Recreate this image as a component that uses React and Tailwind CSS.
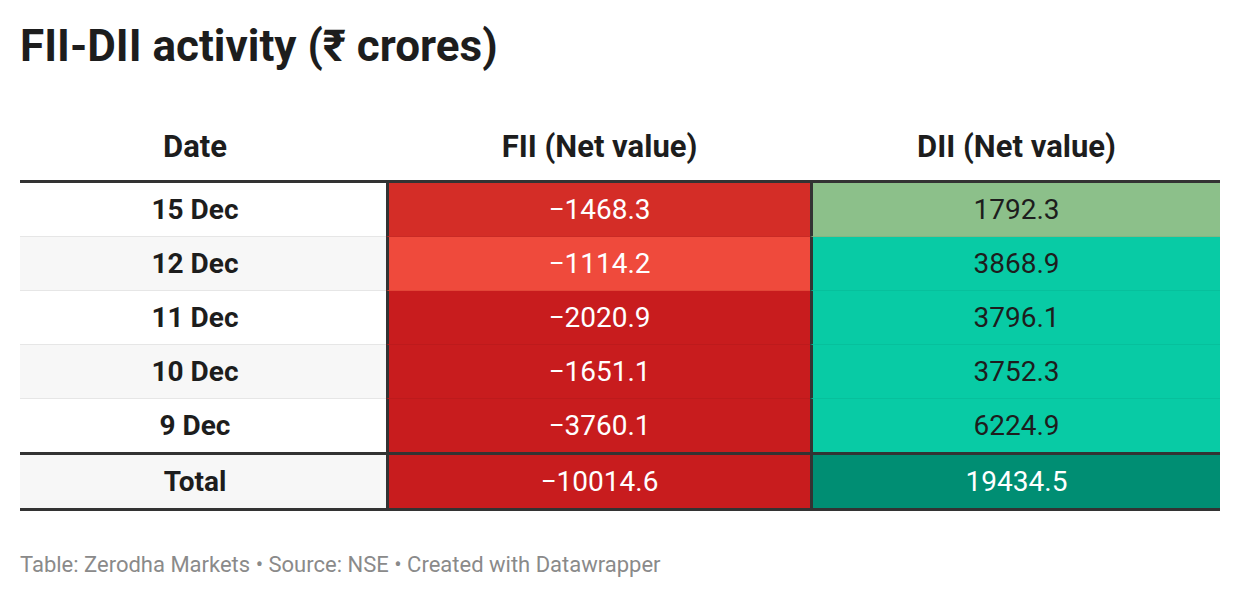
import React from "react";

const rows = [
  { d: "15 Dec", f: "−1468.3", fb: "bg-[#d42d27]", v: "1792.3", vb: "bg-[#8cc08a]", alt: false },
  { d: "12 Dec", f: "−1114.2", fb: "bg-[#ef4a3c]", v: "3868.9", vb: "bg-[#08cba5]", alt: true },
  { d: "11 Dec", f: "−2020.9", fb: "bg-[#c81c1e]", v: "3796.1", vb: "bg-[#08cba5]", alt: false },
  { d: "10 Dec", f: "−1651.1", fb: "bg-[#c81c1e]", v: "3752.3", vb: "bg-[#08cba5]", alt: true },
  { d: "9 Dec", f: "−3760.1", fb: "bg-[#c81c1e]", v: "6224.9", vb: "bg-[#08cba5]", alt: false },
];

export default function App() {
  return (
    <div
      className="w-[1240px] h-[598px] bg-white px-[20px] text-[#1d1d1d]"
      style={{ fontFamily: "Roboto, 'Liberation Sans', sans-serif" }}
    >
      <h1 className="pt-[20px] text-[44px] leading-[53px] font-bold">
        FII-DII activity (₹ crores)
      </h1>

      <div className="grid grid-cols-[366px_424px_410px] h-[107px] items-end text-[31px] leading-[34px] font-bold">
        <div className="pb-[16px] pr-[16px] text-center">Date</div>
        <div className="pb-[16px] pl-[3px] text-center">FII (Net value)</div>
        <div className="pb-[16px] pl-[3px] text-center">DII (Net value)</div>
      </div>

      <div className="border-t-[3px] border-[#333333] text-[28px]">
        {rows.map((r, i) => {
          const last = i === rows.length - 1;
          return (
            <div
              key={r.d}
              className={`grid grid-cols-[366px_424px_410px] ${last ? "h-[53px]" : "h-[54px]"}`}
            >
              <div
                className={`flex items-center justify-center pr-[16px] font-bold ${r.alt ? "bg-[#f7f7f7]" : "bg-white"} ${last ? "" : "border-b border-[#e6e6e6]"}`}
              >
                {r.d}
              </div>
              <div
                className={`flex items-center justify-center border-l-[3px] border-l-[#333333] text-white ${r.fb} ${last ? "" : "border-b border-b-black/5"}`}
              >
                {r.f}
              </div>
              <div
                className={`flex items-center justify-center border-l-[3px] border-l-[#333333] text-[#1d1d1d] ${r.vb} ${last ? "" : "border-b border-b-black/5"}`}
              >
                {r.v}
              </div>
            </div>
          );
        })}
      </div>

      <div className="grid grid-cols-[366px_424px_410px] h-[59px] border-y-[3px] border-[#333333] text-[28px]">
        <div className="flex items-center justify-center pr-[16px] font-bold bg-[#f7f7f7]">Total</div>
        <div className="flex items-center justify-center border-l-[3px] border-[#333333] bg-[#c81c1e] text-white">
          −10014.6
        </div>
        <div className="flex items-center justify-center border-l-[3px] border-[#333333] bg-[#008e73] text-white">
          19434.5
        </div>
      </div>

      <p className="mt-[41px] text-[22px] leading-[26px] text-[#8a8a8a]">
        Table: Zerodha Markets • Source: NSE • Created with Datawrapper
      </p>
    </div>
  );
}
